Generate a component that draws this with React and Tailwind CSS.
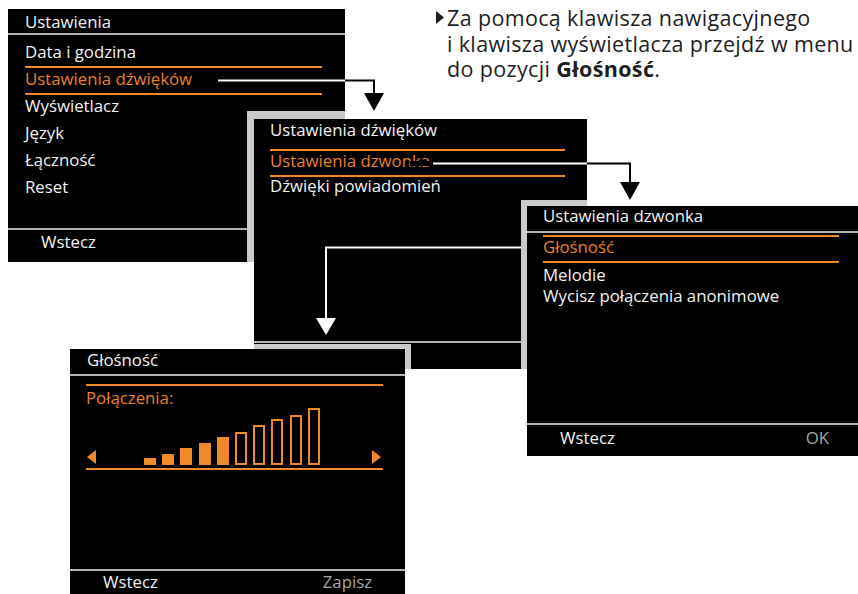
const bars = [
  { h: 'h-[7px]', filled: true },
  { h: 'h-[11px]', filled: true },
  { h: 'h-[17px]', filled: true },
  { h: 'h-[22px]', filled: true },
  { h: 'h-[28px]', filled: true },
  { h: 'h-[33px]', filled: false },
  { h: 'h-[40px]', filled: false },
  { h: 'h-[46px]', filled: false },
  { h: 'h-[50px]', filled: false },
  { h: 'h-[57px]', filled: false },
];

function Arrows() {
  return (
    <svg className="absolute left-0 top-0 pointer-events-none" width="858" height="594" viewBox="0 0 858 594">
      {/* Ustawienia dźwięków -> screen 2 */}
      <path d="M218 80.5 H345" stroke="#fff" strokeWidth="2" fill="none" />
      <path d="M345 80.5 H374 V96" stroke="#000" strokeWidth="2" fill="none" />
      <polygon points="364,93 384,93 374,111" fill="#000" />

      {/* Ustawienia dzwonka -> screen 3 */}
      <path d="M410 163.5 H587" stroke="#000" strokeWidth="5" fill="none" />
      <path d="M433 163.5 H587" stroke="#fff" strokeWidth="2" fill="none" />
      <path d="M587 163.5 H630 V185" stroke="#000" strokeWidth="2" fill="none" />
      <polygon points="620,182 640,182 630,200" fill="#000" />

      {/* Głośność -> screen 4 */}
      <path d="M521 247.5 H326 V320" stroke="#fff" strokeWidth="2" fill="none" />
      <polygon points="316,318 336,318 326,335" fill="#fff" />
    </svg>
  );
}

export default function App() {
  return (
    <div className="relative w-[858px] h-[594px] overflow-hidden bg-white font-['Open_Sans',sans-serif]">
      {/* instruction text */}
      <div className="absolute left-[436px] top-[5px] flex text-[21.5px] tracking-[0.35px] leading-[25.5px] text-[#1e1e1e] whitespace-nowrap">
        <svg className="mt-[6px] mr-[3px] shrink-0" width="8" height="13" viewBox="0 0 8 13">
          <polygon points="0,0 8,6.5 0,13" fill="#1e1e1e" />
        </svg>
        <p>
          Za pomocą klawisza nawigacyjnego
          <br />
          i klawisza wyświetlacza przejdź w menu
          <br />
          do pozycji <b className="font-bold">Głośność</b>.
        </p>
      </div>

      {/* screen 1 */}
      <div className="absolute left-[8px] top-[9px] w-[337px] h-[253px] bg-black flex flex-col text-[16.8px] leading-[20px] text-[#f2f2f2]">
        <div className="h-[24px] pt-[3px] pl-[17px]">Ustawienia</div>
        <div className="h-[2px] bg-[#b3b3b3]" />
        <div className="mt-[4px] ml-[17px] mr-[23px] flex flex-col">
          <div className="h-[27px] pt-[3px]">Data i godzina</div>
          <div className="h-[27px] pt-[1px] border-t-2 border-[#ef8a2b] shadow-[0_2px_0_#ef8a2b] text-[#ea8127]">Ustawienia dźwięków</div>
          <div className="h-[27px] pt-[3px]">Wyświetlacz</div>
          <div className="h-[27px] pt-[3px]">Język</div>
          <div className="h-[27px] pt-[3px]">Łączność</div>
          <div className="h-[27px] pt-[3px]">Reset</div>
        </div>
        <div className="mt-auto h-[34px] border-t-2 border-[#b3b3b3] pt-[2px] pl-[33px]">Wstecz</div>
      </div>

      <div className="absolute left-[247px] top-[111px] w-[98px] h-[151px] bg-[#c9c9c9]" />

      {/* screen 2 */}
      <div className="absolute left-[254px] top-[119px] w-[333px] h-[250px] bg-black flex flex-col text-[16.8px] leading-[20px] text-[#f2f2f2]">
        <div className="h-[24px] pt-[1px] pl-[16px]">Ustawienia dźwięków</div>
        <div className="h-[2px]" />
        <div className="mt-[4px] ml-[16px] mr-[22px] flex flex-col">
          <div className="h-[26px] border-t-2 border-[#ef8a2b] shadow-[0_2px_0_#ef8a2b] text-[#ea8127]">Ustawienia dzwonka</div>
          <div className="h-[27px] pt-[1px]">Dźwięki powiadomień</div>
        </div>
        <div className="mt-auto h-[28px] border-t-2 border-[#b3b3b3]" />
      </div>

      <div className="absolute left-[521px] top-[200px] w-[66px] h-[169px] bg-[#c9c9c9]" />

      {/* screen 3 */}
      <div className="absolute left-[527px] top-[206px] w-[331px] h-[250px] bg-black flex flex-col text-[16.8px] leading-[20px] text-[#f2f2f2]">
        <div className="h-[25px] pl-[16px]">Ustawienia dzwonka</div>
        <div className="h-[2px] bg-[#b3b3b3]" />
        <div className="mt-[2px] ml-[16px] mr-[19px] flex flex-col">
          <div className="h-[26px] border-t-2 border-[#ef8a2b] shadow-[0_2px_0_#ef8a2b] text-[#ea8127]">Głośność</div>
          <div className="h-[24px] pt-[4px]">Melodie</div>
          <div className="pt-[1px]">Wycisz połączenia anonimowe</div>
        </div>
        <div className="mt-auto h-[33px] border-t-2 border-[#b3b3b3] pt-[3px] pl-[33px] pr-[29px] flex justify-between">
          <span>Wstecz</span>
          <span className="text-[#a6a6a6]">OK</span>
        </div>
      </div>

      <div className="absolute left-[254px] top-[344px] w-[157px] h-[25px] bg-[#c9c9c9]" />

      {/* screen 4 */}
      <div className="absolute left-[70px] top-[349px] w-[335px] h-[245px] bg-black flex flex-col text-[16.8px] leading-[20px] text-[#f2f2f2]">
        <div className="h-[25px] pt-[1px] pl-[17px]">Głośność</div>
        <div className="h-[2px] bg-[#b3b3b3]" />
        <div className="mt-[8px] ml-[16px] mr-[22px] h-[86px] border-y-2 border-[#ef8a2b] flex flex-col">
          <div className="pt-[2px] text-[#ea8127]">Połączenia:</div>
          <div className="flex-1 flex items-end pb-[4px] pl-[1px] pr-[2px]">
            <svg className="mb-[1px]" width="9" height="14" viewBox="0 0 9 14">
              <polygon points="9,0 9,14 0,7" fill="#ef8a2b" />
            </svg>
            <div className="ml-[48px] flex items-end gap-[6.2px]">
              {bars.map((b, i) => (
                <div
                  key={i}
                  className={`w-[12px] ${b.h} ${b.filled ? 'bg-[#ef8a2b]' : 'border-2 border-[#ef8a2b]'}`}
                />
              ))}
            </div>
            <svg className="ml-auto mb-[1px]" width="9" height="14" viewBox="0 0 9 14">
              <polygon points="0,0 9,7 0,14" fill="#ef8a2b" />
            </svg>
          </div>
        </div>
        <div className="mt-auto h-[25px] border-t-2 border-[#b3b3b3] pt-[1px] pl-[33px] pr-[33px] flex justify-between">
          <span>Wstecz</span>
          <span className="text-[#a6a6a6]">Zapisz</span>
        </div>
      </div>

      <Arrows />
    </div>
  );
}
